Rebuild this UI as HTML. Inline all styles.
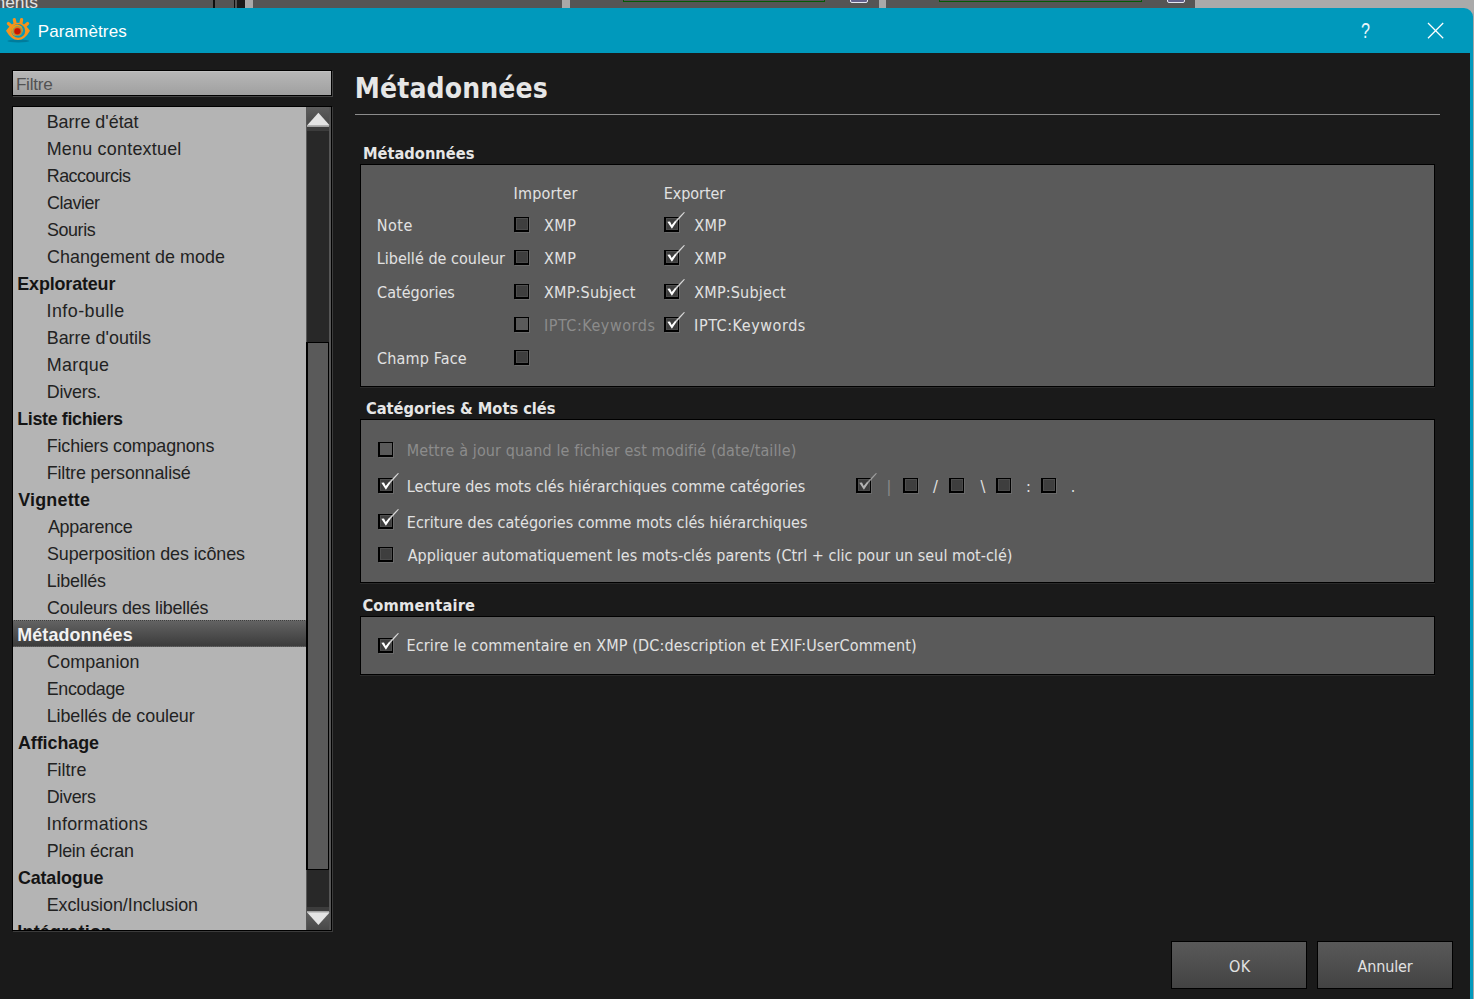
<!DOCTYPE html>
<html lang="fr">
<head>
<meta charset="utf-8">
<title>Paramètres</title>
<style>
*{box-sizing:border-box;margin:0;padding:0}
html,body{width:1474px;height:999px;overflow:hidden;background:#1a1a1a}
body{font-family:"Liberation Sans","DejaVu Sans",sans-serif;position:relative;color:#e2e2e2}
.abs{position:absolute}
.tx{position:absolute;white-space:pre;line-height:24px;font-weight:normal;font-family:"DejaVu Sans Condensed","Liberation Sans",sans-serif}
/* strip of the application window visible behind the dialog */
#strip{left:0;top:0;width:1474px;height:8px;background:#555555;overflow:hidden}
#strip i{position:absolute;display:block;font-style:normal}
#strip .txt{left:-4.5px;top:-9.5px;font-size:17.4px;line-height:22px;color:#e4e4e4;white-space:pre}
/* title bar */
#tbar{left:0;top:8px;width:1473px;height:45px;background:#0099bc;border-top-right-radius:9px}
#rborder{left:1470px;top:16px;width:3px;height:983px;background:#0099bc}
#rshade{left:1473px;top:12px;width:1px;height:987px;background:#a6a6a6}
/* sidebar */
#filter{left:12px;top:70px;width:320px;height:26px;border:1px solid #000;background:linear-gradient(#c6c6c6 0,#b6b6b6 1.5px,#a0a0a0 100%);box-shadow:1px 1px 0 #444}
#list{left:12px;top:106px;width:320px;height:825px;border:1px solid #000;background:#b4b4b4;overflow:hidden;box-shadow:1px 1px 0 #3b3b3b}
#org{position:absolute;left:-13px;top:-107px;width:0;height:0}
#sel{left:13px;top:620px;width:293px;height:27px;background:linear-gradient(#626262,#3c3c3c);border-top:1px dotted #727272;border-bottom:1px dotted #505050}
#sb{left:306px;top:107px;width:25px;height:823px;background:#282828;border-left:1px solid #585858;border-right:2px solid #565656}
#sb .btn{position:absolute;left:0;width:22px;height:20px;background:linear-gradient(#5e5e5e,#484848)}
#sb .ln{position:absolute;left:0;width:22px;height:1.5px;background:#a2a2a2}
#sb .bd{position:absolute;left:0;width:22px;height:4.5px;background:#3c3c3c}
#sb .thumb{position:absolute;left:-1px;top:235px;width:23px;height:528px;background:#5a5a5a;border:1px solid #000;border-left-width:2px}
/* content */
#hr{left:355px;top:114px;width:1085px;height:1px;background:#8c8c8c}
.gb{left:360px;width:1075px;background:#5a5a5a;border:1px solid #000;box-shadow:0 1px 0 #2a2a2a}
.cb{position:absolute;width:15px;height:15px;background:#3e3e3e;border:solid #000;border-width:1.7px 1.6px 2px 2px;box-shadow:1px 1px 0 #6a6a6a, inset 1px 1px 0 #4e4e4e, inset -1px -1px 0 #4a4a4a}
.cb.dis{background:#5a5a5a;box-shadow:1px 1px 0 #6a6a6a}
svg.ck{position:absolute;overflow:visible}
/* buttons */
.btnb{top:941px;width:136px;height:48px;border:1px solid #000;background:linear-gradient(#595959,#434343)}
</style>
</head>
<body>
<div id="strip" class="abs">
 <i class="txt">nents</i>
 <i style="left:213px;top:0;width:1.5px;height:8px;background:#0e0e0e"></i>
 <i style="left:234px;top:0;width:1.2px;height:8px;background:#0e0e0e"></i>
 <i style="left:237px;top:0;width:8px;height:8px;background:#1a1a1a"></i>
 <i style="left:245px;top:0;width:8px;height:8px;background:#a9a9a9"></i>
 <i style="left:562px;top:0;width:8px;height:8px;background:#a9a9a9"></i>
 <i style="left:623px;top:-6px;width:202px;height:8px;border:1.3px solid #045a04;background:#585458"></i>
 <i style="left:850px;top:-6px;width:18px;height:9px;border:1px solid #e6e6f2;border-radius:2px;background:#62628c"></i>
 <i style="left:879px;top:0;width:7px;height:8px;background:#a9a9a9"></i>
 <i style="left:939px;top:-6px;width:203px;height:8px;border:1.3px solid #045a04;background:#585458"></i>
 <i style="left:1166.5px;top:-6px;width:18px;height:9px;border:1px solid #e6e6f2;border-radius:2px;background:#62628c"></i>
 <i style="left:1195px;top:0;width:279px;height:8px;background:#aaaaaa"></i>
</div>
<div class="abs" style="left:1455px;top:8px;width:19px;height:14px;background:#aaaaaa"></div>
<div id="tbar" class="abs"></div>
<div id="rborder" class="abs"></div>
<div id="rshade" class="abs"></div>
<svg class="abs" style="left:2px;top:14px" width="32" height="32" viewBox="0 0 32 32">
 <ellipse cx="16.3" cy="27" rx="11" ry="1.5" fill="#00607c" opacity=".5"/>
 <g stroke="#f7931c" stroke-width="3.2" stroke-linecap="round">
  <line x1="12.3" y1="5.5" x2="13.3" y2="10.5"/>
  <line x1="19.6" y1="5.5" x2="18.7" y2="10.5"/>
  <line x1="6.4" y1="9.5" x2="10.5" y2="13.2"/>
  <line x1="25.6" y1="9.5" x2="21.5" y2="13.2"/>
 </g>
 <path d="M4 16.7 Q8.5 11 11 9.8 Q16 7.6 21 9.8 Q23.5 11 28 16.7 Q22.5 26.2 16 25.9 Q9.5 26.2 4 16.7 Z" fill="#f7931c"/>
 <circle cx="16.3" cy="16.9" r="6.9" fill="#0a98b8"/>
 <circle cx="15.1" cy="16.3" r="5.8" fill="#f79a10"/>
 <circle cx="15.5" cy="17.1" r="4.4" fill="none" stroke="#1496b0" stroke-width=".7" opacity=".85"/>
 <circle cx="15.5" cy="17.2" r="3.7" fill="#e8560a"/>
 <circle cx="15.4" cy="17.2" r="3" fill="#c41600"/>
</svg>
<svg class="abs" style="left:1424px;top:19px" width="24" height="24" viewBox="0 0 24 24">
 <path d="M4 4 L19.2 19.2 M19.2 4 L4 19.2" stroke="#ffffff" stroke-width="1.25" fill="none"/>
</svg>

<div id="filter" class="abs"></div>
<div id="list" class="abs">
 <div id="org">
  <div id="sel" class="abs"></div>
  <div class="tx" style="left:46.7px;top:109.9px;font-size:17.9px;color:#222222;font-family:'Liberation Sans','DejaVu Sans',sans-serif;letter-spacing:-0.007px">Barre d'état</div>
  <div class="tx" style="left:46.7px;top:136.9px;font-size:17.9px;color:#222222;font-family:'Liberation Sans','DejaVu Sans',sans-serif;letter-spacing:0.240px">Menu contextuel</div>
  <div class="tx" style="left:46.7px;top:163.9px;font-size:17.9px;color:#222222;font-family:'Liberation Sans','DejaVu Sans',sans-serif;letter-spacing:-0.467px">Raccourcis</div>
  <div class="tx" style="left:47.1px;top:190.9px;font-size:17.9px;color:#222222;font-family:'Liberation Sans','DejaVu Sans',sans-serif;letter-spacing:-0.481px">Clavier</div>
  <div class="tx" style="left:47.0px;top:217.9px;font-size:17.9px;color:#222222;font-family:'Liberation Sans','DejaVu Sans',sans-serif;letter-spacing:-0.410px">Souris</div>
  <div class="tx" style="left:47.1px;top:244.9px;font-size:17.9px;color:#222222;font-family:'Liberation Sans','DejaVu Sans',sans-serif;letter-spacing:0.049px">Changement de mode</div>
  <div class="tx" style="left:17.3px;top:271.9px;font-size:17.9px;color:#141414;font-family:'Liberation Sans','DejaVu Sans',sans-serif;font-weight:bold;letter-spacing:-0.134px">Explorateur</div>
  <div class="tx" style="left:46.5px;top:298.9px;font-size:17.9px;color:#222222;font-family:'Liberation Sans','DejaVu Sans',sans-serif;letter-spacing:0.456px">Info-bulle</div>
  <div class="tx" style="left:46.7px;top:325.9px;font-size:17.9px;color:#222222;font-family:'Liberation Sans','DejaVu Sans',sans-serif;letter-spacing:0.026px">Barre d'outils</div>
  <div class="tx" style="left:46.7px;top:352.9px;font-size:17.9px;color:#222222;font-family:'Liberation Sans','DejaVu Sans',sans-serif;letter-spacing:0.328px">Marque</div>
  <div class="tx" style="left:46.7px;top:379.9px;font-size:17.9px;color:#222222;font-family:'Liberation Sans','DejaVu Sans',sans-serif;letter-spacing:-0.210px">Divers.</div>
  <div class="tx" style="left:17.3px;top:406.9px;font-size:17.9px;color:#141414;font-family:'Liberation Sans','DejaVu Sans',sans-serif;font-weight:bold;letter-spacing:-0.364px">Liste fichiers</div>
  <div class="tx" style="left:46.7px;top:433.9px;font-size:17.9px;color:#222222;font-family:'Liberation Sans','DejaVu Sans',sans-serif;letter-spacing:-0.131px">Fichiers compagnons</div>
  <div class="tx" style="left:46.7px;top:460.9px;font-size:17.9px;color:#222222;font-family:'Liberation Sans','DejaVu Sans',sans-serif;letter-spacing:-0.115px">Filtre personnalisé</div>
  <div class="tx" style="left:18.2px;top:487.9px;font-size:17.9px;color:#141414;font-family:'Liberation Sans','DejaVu Sans',sans-serif;font-weight:bold;letter-spacing:0.221px">Vignette</div>
  <div class="tx" style="left:47.9px;top:514.9px;font-size:17.9px;color:#222222;font-family:'Liberation Sans','DejaVu Sans',sans-serif;letter-spacing:-0.222px">Apparence</div>
  <div class="tx" style="left:47.0px;top:541.9px;font-size:17.9px;color:#222222;font-family:'Liberation Sans','DejaVu Sans',sans-serif;letter-spacing:-0.082px">Superposition des icônes</div>
  <div class="tx" style="left:46.7px;top:568.9px;font-size:17.9px;color:#222222;font-family:'Liberation Sans','DejaVu Sans',sans-serif;letter-spacing:-0.205px">Libellés</div>
  <div class="tx" style="left:47.1px;top:595.9px;font-size:17.9px;color:#222222;font-family:'Liberation Sans','DejaVu Sans',sans-serif;letter-spacing:-0.181px">Couleurs des libellés</div>
  <div class="tx" style="left:17.3px;top:622.9px;font-size:17.9px;color:#f2f2f2;font-family:'Liberation Sans','DejaVu Sans',sans-serif;font-weight:bold;letter-spacing:0.098px">Métadonnées</div>
  <div class="tx" style="left:47.1px;top:649.9px;font-size:17.9px;color:#222222;font-family:'Liberation Sans','DejaVu Sans',sans-serif;letter-spacing:0.113px">Companion</div>
  <div class="tx" style="left:46.7px;top:676.9px;font-size:17.9px;color:#222222;font-family:'Liberation Sans','DejaVu Sans',sans-serif;letter-spacing:-0.323px">Encodage</div>
  <div class="tx" style="left:46.7px;top:703.9px;font-size:17.9px;color:#222222;font-family:'Liberation Sans','DejaVu Sans',sans-serif;letter-spacing:-0.069px">Libellés de couleur</div>
  <div class="tx" style="left:17.9px;top:730.9px;font-size:17.9px;color:#141414;font-family:'Liberation Sans','DejaVu Sans',sans-serif;font-weight:bold;letter-spacing:-0.045px">Affichage</div>
  <div class="tx" style="left:46.7px;top:757.9px;font-size:17.9px;color:#222222;font-family:'Liberation Sans','DejaVu Sans',sans-serif;letter-spacing:0.008px">Filtre</div>
  <div class="tx" style="left:46.7px;top:784.9px;font-size:17.9px;color:#222222;font-family:'Liberation Sans','DejaVu Sans',sans-serif;letter-spacing:-0.287px">Divers</div>
  <div class="tx" style="left:46.5px;top:811.9px;font-size:17.9px;color:#222222;font-family:'Liberation Sans','DejaVu Sans',sans-serif;letter-spacing:0.251px">Informations</div>
  <div class="tx" style="left:46.7px;top:838.9px;font-size:17.9px;color:#222222;font-family:'Liberation Sans','DejaVu Sans',sans-serif;letter-spacing:-0.229px">Plein écran</div>
  <div class="tx" style="left:17.9px;top:865.9px;font-size:17.9px;color:#141414;font-family:'Liberation Sans','DejaVu Sans',sans-serif;font-weight:bold;letter-spacing:-0.121px">Catalogue</div>
  <div class="tx" style="left:46.7px;top:892.9px;font-size:17.9px;color:#222222;font-family:'Liberation Sans','DejaVu Sans',sans-serif;letter-spacing:-0.046px">Exclusion/Inclusion</div>
  <div class="tx" style="left:17.3px;top:919.9px;font-size:17.9px;color:#141414;font-family:'Liberation Sans','DejaVu Sans',sans-serif;font-weight:bold;letter-spacing:0.227px">Intégration</div>
  <div id="sb" class="abs">
   <div class="btn" style="top:0;height:18px"></div>
   <div class="ln" style="top:18px"></div>
   <div class="bd" style="top:19.5px"></div>
   <svg class="abs" style="left:-1px;top:0" width="25" height="20" viewBox="0 0 25 20"><path d="M12.4 5.8 L23.6 18.2 L1.2 18.2 Z" fill="#e4e4e4"/></svg>
   <div class="thumb"></div>
   <div class="bd" style="top:800px"></div>
   <div class="ln" style="top:804.3px"></div>
   <div class="btn" style="top:805.5px;height:17.5px"></div>
   <svg class="abs" style="left:-1px;top:803px" width="25" height="20" viewBox="0 0 25 20"><path d="M12.4 15 L23.6 2.4 L1.2 2.4 Z" fill="#e4e4e4"/></svg>
  </div>
 </div>
</div>

<div id="hr" class="abs"></div>
<div class="abs gb" style="top:164px;height:223px"></div>
<div class="abs gb" style="top:419px;height:164px"></div>
<div class="abs gb" style="top:616px;height:59px"></div>

<div class="abs btnb" style="left:1171px"></div>
<div class="abs btnb" style="left:1317px"></div>
<div class="cb" style="left:514px;top:217px"></div>
<div class="cb" style="left:664px;top:217px"></div>
<svg class="ck" style="left:664px;top:211px" width="22" height="21" viewBox="0 0 22 21"><path d="M3.3 10.7 L6 10.5 L7.7 14 L11 10.1 L12.4 10.9 L7.9 17.8 Z" fill="#ffffff"/><path d="M10.6 10.6 L20 0.9 L20.9 1.6 L12 11.4 Z" fill="#ffffff" opacity=".78"/></svg>
<div class="cb" style="left:514px;top:250px"></div>
<div class="cb" style="left:664px;top:250px"></div>
<svg class="ck" style="left:664px;top:244px" width="22" height="21" viewBox="0 0 22 21"><path d="M3.3 10.7 L6 10.5 L7.7 14 L11 10.1 L12.4 10.9 L7.9 17.8 Z" fill="#ffffff"/><path d="M10.6 10.6 L20 0.9 L20.9 1.6 L12 11.4 Z" fill="#ffffff" opacity=".78"/></svg>
<div class="cb" style="left:514px;top:284px"></div>
<div class="cb" style="left:664px;top:284px"></div>
<svg class="ck" style="left:664px;top:278px" width="22" height="21" viewBox="0 0 22 21"><path d="M3.3 10.7 L6 10.5 L7.7 14 L11 10.1 L12.4 10.9 L7.9 17.8 Z" fill="#ffffff"/><path d="M10.6 10.6 L20 0.9 L20.9 1.6 L12 11.4 Z" fill="#ffffff" opacity=".78"/></svg>
<div class="cb dis" style="left:514px;top:317px"></div>
<div class="cb" style="left:664px;top:317px"></div>
<svg class="ck" style="left:664px;top:311px" width="22" height="21" viewBox="0 0 22 21"><path d="M3.3 10.7 L6 10.5 L7.7 14 L11 10.1 L12.4 10.9 L7.9 17.8 Z" fill="#ffffff"/><path d="M10.6 10.6 L20 0.9 L20.9 1.6 L12 11.4 Z" fill="#ffffff" opacity=".78"/></svg>
<div class="cb" style="left:514px;top:350px"></div>
<div class="cb dis" style="left:378px;top:442px"></div>
<div class="cb" style="left:378px;top:478px"></div>
<svg class="ck" style="left:378px;top:472px" width="22" height="21" viewBox="0 0 22 21"><path d="M3.3 10.7 L6 10.5 L7.7 14 L11 10.1 L12.4 10.9 L7.9 17.8 Z" fill="#ffffff"/><path d="M10.6 10.6 L20 0.9 L20.9 1.6 L12 11.4 Z" fill="#ffffff" opacity=".78"/></svg>
<div class="cb" style="left:378px;top:514px"></div>
<svg class="ck" style="left:378px;top:508px" width="22" height="21" viewBox="0 0 22 21"><path d="M3.3 10.7 L6 10.5 L7.7 14 L11 10.1 L12.4 10.9 L7.9 17.8 Z" fill="#ffffff"/><path d="M10.6 10.6 L20 0.9 L20.9 1.6 L12 11.4 Z" fill="#ffffff" opacity=".78"/></svg>
<div class="cb" style="left:378px;top:547px"></div>
<div class="cb" style="left:856px;top:478px"></div>
<svg class="ck" style="left:856px;top:472px" width="22" height="21" viewBox="0 0 22 21"><path d="M3.3 10.7 L6 10.5 L7.7 14 L11 10.1 L12.4 10.9 L7.9 17.8 Z" fill="#b4b4b4"/><path d="M10.6 10.6 L20 0.9 L20.9 1.6 L12 11.4 Z" fill="#b4b4b4" opacity=".78"/></svg>
<div class="cb" style="left:903px;top:478px"></div>
<div class="cb" style="left:949px;top:478px"></div>
<div class="cb" style="left:996px;top:478px"></div>
<div class="cb" style="left:1041px;top:478px"></div>
<div class="cb" style="left:378px;top:638px"></div>
<svg class="ck" style="left:378px;top:632px" width="22" height="21" viewBox="0 0 22 21"><path d="M3.3 10.7 L6 10.5 L7.7 14 L11 10.1 L12.4 10.9 L7.9 17.8 Z" fill="#ffffff"/><path d="M10.6 10.6 L20 0.9 L20.9 1.6 L12 11.4 Z" fill="#ffffff" opacity=".78"/></svg>
<div class="tx" style="left:37.7px;top:19.6px;font-size:17px;color:#ffffff;font-family:'Liberation Sans','DejaVu Sans',sans-serif;letter-spacing:0.132px">Paramètres</div>
<div class="tx" style="left:15.9px;top:72.0px;font-size:17.2px;color:#525252;font-family:'Liberation Sans','DejaVu Sans',sans-serif;letter-spacing:-0.272px">Filtre</div>
<div class="tx" style="left:354.8px;top:76.7px;font-size:28px;color:#e6e6e6;font-weight:bold;letter-spacing:0.136px">Métadonnées</div>
<div class="tx" style="left:362.9px;top:141.7px;font-size:16.3px;color:#e6e6e6;font-weight:bold;letter-spacing:0.010px">Métadonnées</div>
<div class="tx" style="left:366.0px;top:396.6px;font-size:16.3px;color:#e6e6e6;font-weight:bold;letter-spacing:-0.014px">Catégories &amp; Mots clés</div>
<div class="tx" style="left:362.4px;top:594.0px;font-size:16.3px;color:#e6e6e6;font-weight:bold;letter-spacing:0.183px">Commentaire</div>
<div class="tx" style="left:513.6px;top:181.7px;font-size:16px;color:#e2e2e2;letter-spacing:0.178px">Importer</div>
<div class="tx" style="left:663.7px;top:181.7px;font-size:16px;color:#e2e2e2;letter-spacing:-0.046px">Exporter</div>
<div class="tx" style="left:376.7px;top:213.6px;font-size:16px;color:#e2e2e2;letter-spacing:0.548px">Note</div>
<div class="tx" style="left:544.1px;top:213.6px;font-size:16px;color:#e2e2e2;letter-spacing:0.408px">XMP</div>
<div class="tx" style="left:694.3px;top:213.6px;font-size:16px;color:#e2e2e2;letter-spacing:0.408px">XMP</div>
<div class="tx" style="left:376.7px;top:246.7px;font-size:16px;color:#e2e2e2;letter-spacing:0.032px">Libellé de couleur</div>
<div class="tx" style="left:544.1px;top:246.7px;font-size:16px;color:#e2e2e2;letter-spacing:0.408px">XMP</div>
<div class="tx" style="left:694.3px;top:246.7px;font-size:16px;color:#e2e2e2;letter-spacing:0.408px">XMP</div>
<div class="tx" style="left:377.1px;top:280.5px;font-size:16px;color:#e2e2e2;letter-spacing:0.012px">Catégories</div>
<div class="tx" style="left:544.1px;top:280.5px;font-size:16px;color:#e2e2e2;letter-spacing:0.171px">XMP:Subject</div>
<div class="tx" style="left:694.3px;top:280.5px;font-size:16px;color:#e2e2e2;letter-spacing:0.171px">XMP:Subject</div>
<div class="tx" style="left:543.9px;top:313.6px;font-size:16px;color:#8c8c8c;letter-spacing:0.541px">IPTC:Keywords</div>
<div class="tx" style="left:694.1px;top:313.6px;font-size:16px;color:#e2e2e2;letter-spacing:0.558px">IPTC:Keywords</div>
<div class="tx" style="left:377.1px;top:346.7px;font-size:16px;color:#e2e2e2;letter-spacing:0.162px">Champ Face</div>
<div class="tx" style="left:406.8px;top:438.9px;font-size:16px;color:#8c8c8c;letter-spacing:0.117px">Mettre à jour quand le fichier est modifié (date/taille)</div>
<div class="tx" style="left:406.8px;top:474.7px;font-size:16px;color:#e2e2e2;letter-spacing:0.010px">Lecture des mots clés hiérarchiques comme catégories</div>
<div class="tx" style="left:406.8px;top:510.7px;font-size:16px;color:#e2e2e2;letter-spacing:0.006px">Ecriture des catégories comme mots clés hiérarchiques</div>
<div class="tx" style="left:407.7px;top:544.0px;font-size:16px;color:#e2e2e2;letter-spacing:0.041px">Appliquer automatiquement les mots-clés parents (Ctrl + clic pour un seul mot-clé)</div>
<div class="tx" style="left:886.6px;top:474.7px;font-size:16px;color:#8c8c8c">|</div>
<div class="tx" style="left:933.0px;top:474.7px;font-size:16px;color:#e2e2e2">/</div>
<div class="tx" style="left:980.4px;top:474.7px;font-size:16px;color:#e2e2e2">\</div>
<div class="tx" style="left:1026.1px;top:474.7px;font-size:16px;color:#e2e2e2">:</div>
<div class="tx" style="left:1070.7px;top:474.7px;font-size:16px;color:#e2e2e2">.</div>
<div class="tx" style="left:406.5px;top:634.2px;font-size:16px;color:#e2e2e2;letter-spacing:0.144px">Ecrire le commentaire en XMP (DC:description et EXIF:UserComment)</div>
<div class="tx" style="left:1228.9px;top:954.8px;font-size:16px;color:#e2e2e2;letter-spacing:0.455px">OK</div>
<div class="tx" style="left:1357.4px;top:954.8px;font-size:16px;color:#e2e2e2;letter-spacing:-0.106px">Annuler</div>
<div class="tx" style="left:1360.8px;top:19.0px;font-size:21.8px;color:#e8f6fa;font-family:'Liberation Sans','DejaVu Sans',sans-serif;transform:scaleX(.74);transform-origin:0 0">?</div>
</body>
</html>
